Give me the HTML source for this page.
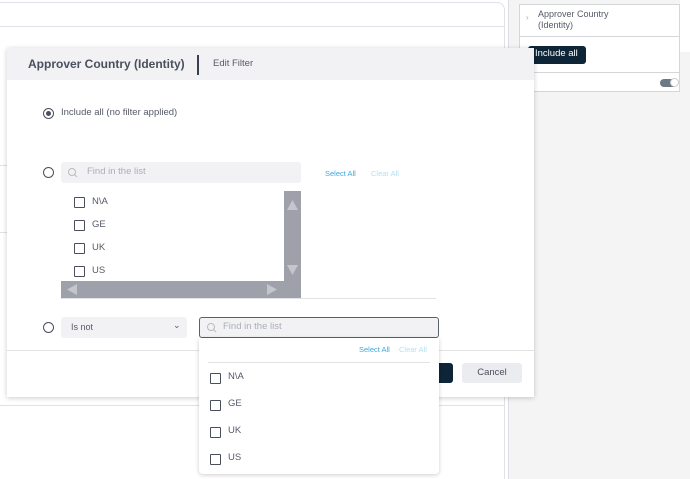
<!DOCTYPE html>
<html><head><style>
*{box-sizing:border-box;margin:0;padding:0}
html,body{width:690px;height:479px;overflow:hidden}
body{background:#fff;font-family:"Liberation Sans",sans-serif;position:relative;color:#4a4f5c}
.a{position:absolute}
.cb{position:absolute;width:11px;height:11px;border:1.5px solid #4a4f5c;border-radius:1px}
.rad{position:absolute;width:11px;height:11px;border:1.3px solid #4a4f5c;border-radius:50%}
.t{position:absolute;font-size:9.5px;color:#555a68;white-space:nowrap}
</style></head><body>
<!-- background -->
<div class="a" style="left:508px;top:0;width:182px;height:479px;background:#f4f4f4;border-left:1px solid #dcdde2"></div>
<div class="a" style="left:680px;top:0;width:10px;height:52px;background:#fff"></div>
<div class="a" style="left:0;top:2px;width:505px;height:477px;border-top:1px solid #dfe1e6;border-right:1px solid #dfe1e6;border-radius:0 8px 0 0;background:#fff"></div>
<div class="a" style="left:0;top:26px;width:505px;height:1px;background:#dfe1e6"></div>
<div class="a" style="left:0;top:165px;width:7px;height:1px;background:#dfe1e6"></div>
<div class="a" style="left:0;top:232px;width:7px;height:1px;background:#dfe1e6"></div>
<div class="a" style="left:0;top:405px;width:505px;height:1px;background:#dfe1e6"></div>
<!-- right card -->
<div class="a" style="left:519px;top:4px;width:161px;height:88px;background:#fff;border:1px solid #d5d6da"></div>
<div class="a" style="left:519px;top:36px;width:161px;height:1px;background:#d5d6da"></div>
<div class="a" style="left:519px;top:72px;width:161px;height:1px;background:#d5d6da"></div>
<div class="t" style="left:526px;top:13px;font-size:8px;color:#aaa">›</div>
<div class="t" style="left:538px;top:9px;font-size:9px;line-height:11px">Approver Country<br>(Identity)</div>
<div class="a" style="left:528px;top:46px;width:58px;height:18px;background:#0d2537;border-radius:3px;color:#fff;font-size:9.5px;padding:2px 0 0 7px">Include all</div>
<div class="a" style="left:660px;top:79px;width:17px;height:8px;background:#6c7a85;border-radius:4px"></div>
<div class="a" style="left:670px;top:78px;width:9px;height:9px;background:#fff;border:1px solid #ccc;border-radius:50%"></div>
<!-- modal -->
<div class="a" style="left:7px;top:48px;width:527px;height:349px;background:#fff;box-shadow:0 1px 5px rgba(0,0,0,.2)"></div>
<div class="a" style="left:7px;top:48px;width:527px;height:32px;background:#f2f2f5"></div>
<div class="t" style="left:28px;top:57px;font-size:12px;font-weight:bold;color:#4a4f5c">Approver Country (Identity)</div>
<div class="a" style="left:197px;top:55px;width:1.5px;height:20px;background:#3b4050"></div>
<div class="t" style="left:213px;top:58px;font-size:9.5px">Edit Filter</div>
<div class="rad" style="left:43px;top:108px;"></div><div class="a" style="left:46px;top:111px;width:5px;height:5px;border-radius:50%;background:#4a4f5c"></div>
<div class="t" style="left:61px;top:107px;">Include all (no filter applied)</div>
<div class="rad" style="left:43px;top:167px"></div>
<div class="a" style="left:61px;top:162px;width:240px;height:21px;background:#f2f2f5;border-radius:3px"></div>
<svg class="a" style="left:67px;top:167px" width="11" height="11"><circle cx="5" cy="5" r="3.5" fill="none" stroke="#bbb"/><line x1="7.5" y1="7.5" x2="10" y2="10" stroke="#bbb"/></svg>
<div class="t" style="left:87px;top:166px;color:#aaaeb8">Find in the list</div>
<div class="t" style="left:325px;top:169px;font-size:7.5px;color:#3aa8e0">Select All</div>
<div class="t" style="left:371px;top:169px;font-size:7.5px;color:#b5def4">Clear All</div>
<div class="a" style="left:284px;top:191px;width:17px;height:107px;background:#9ea1aa"></div>
<div class="a" style="left:61px;top:281px;width:240px;height:17px;background:#9ea1aa"></div>
<svg class="a" style="left:284px;top:191px" width="17" height="107"><polygon points="3,19 14,19 8.5,9" fill="#c4c6cc"/><polygon points="3,74 14,74 8.5,84" fill="#c4c6cc"/></svg>
<svg class="a" style="left:61px;top:281px" width="240" height="17"><polygon points="16,3 16,14 6,8.5" fill="#c4c6cc"/><polygon points="206,3 206,14 216,8.5" fill="#c4c6cc"/></svg>
<div class="cb" style="left:74px;top:197px"></div><div class="t" style="left:92px;top:196px">N\A</div>
<div class="cb" style="left:74px;top:220px"></div><div class="t" style="left:92px;top:219px">GE</div>
<div class="cb" style="left:74px;top:243px"></div><div class="t" style="left:92px;top:242px">UK</div>
<div class="cb" style="left:74px;top:266px"></div><div class="t" style="left:92px;top:265px">US</div>
<div class="a" style="left:61px;top:298px;width:375px;height:1px;background:#e2e3e7"></div>
<div class="rad" style="left:43px;top:322px"></div>
<div class="a" style="left:61px;top:317px;width:126px;height:21px;background:#f2f2f5;border-radius:3px"></div>
<div class="t" style="left:71px;top:322px;font-size:9px">Is not</div>
<div class="t" style="left:173px;top:320px;font-size:9px">⌄</div>
<div class="a" style="left:199px;top:317px;width:240px;height:21px;background:#f2f2f5;border:1.3px solid #5a6070;border-radius:3px"></div>
<svg class="a" style="left:206px;top:322px" width="11" height="11"><circle cx="5" cy="5" r="3.5" fill="none" stroke="#bbb"/><line x1="7.5" y1="7.5" x2="10" y2="10" stroke="#bbb"/></svg>
<div class="t" style="left:223px;top:321px;color:#aaaeb8">Find in the list</div>
<div class="a" style="left:7px;top:350px;width:527px;height:1px;background:#e2e3e7"></div>
<div class="a" style="left:420px;top:363px;width:33px;height:20px;background:#0d2537;border-radius:3px"></div>
<div class="a" style="left:462px;top:363px;width:60px;height:20px;background:#ebecf0;border-radius:3px;font-size:9.5px;text-align:center;padding-top:4px;color:#4a4f5c">Cancel</div>
<!-- dropdown -->
<div class="a" style="left:199px;top:338px;width:240px;height:136px;background:#fff;border-radius:0 0 4px 4px;box-shadow:0 1px 4px rgba(0,0,0,.2)"></div>
<div class="t" style="left:359px;top:345px;font-size:7.5px;color:#3aa8e0">Select All</div>
<div class="t" style="left:399px;top:345px;font-size:7.5px;color:#b5def4">Clear All</div>
<div class="a" style="left:208px;top:362px;width:222px;height:1px;background:#e2e3e7"></div>
<div class="cb" style="left:210px;top:373px"></div><div class="t" style="left:228px;top:371px">N\A</div>
<div class="cb" style="left:210px;top:400px"></div><div class="t" style="left:228px;top:398px">GE</div>
<div class="cb" style="left:210px;top:427px"></div><div class="t" style="left:228px;top:425px">UK</div>
<div class="cb" style="left:210px;top:454px"></div><div class="t" style="left:228px;top:452px">US</div>
</body></html>
